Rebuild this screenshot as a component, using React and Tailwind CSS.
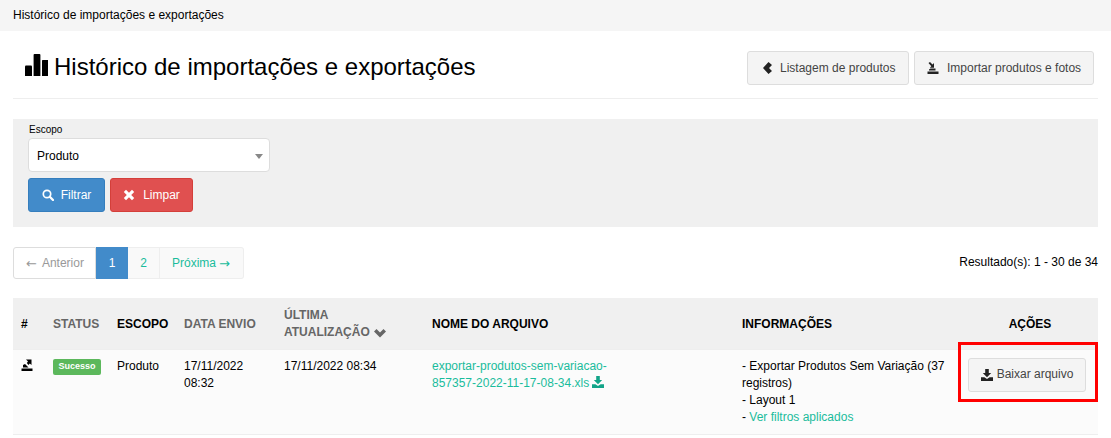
import React from 'react';

// Glyphs drawn by hand, they follow the old bootstrap glyphicons
const StatsIcon = ({ className }) => (
  <svg className={className} viewBox="0 0 23 22" fill="currentColor">
    <path d="M1 11.5 H6 Q7 11.5 7 12.5 V22 H0 V12.5 Q0 11.5 1 11.5 Z" />
    <path d="M9.5 0 H14.5 Q15.4 0 15.4 1 V22 H8.6 V1 Q8.6 0 9.5 0 Z" />
    <path d="M17.6 6 H23 V22 H17 V6.6 Q17 6 17.6 6 Z" />
  </svg>
);

const ChevronLeft = ({ className }) => (
  <svg className={className} viewBox="0 0 12 12" fill="currentColor">
    <path d="M6.5 0 L10 3 L7 6 L10 9 L6.5 12 L1 6 Z" />
  </svg>
);

const ChevronDown = ({ className }) => (
  <svg className={className} viewBox="0 0 12 12" fill="currentColor">
    <path d="M0 4.5 L2.5 2 L6 5.5 L9.5 2 L12 4.5 L6 10.5 Z" />
  </svg>
);

const ImportIcon = ({ className }) => (
  <svg className={className} viewBox="0 0 12 12" fill="currentColor">
    <path d="M0.5 9.5 H11.5 V12 H0.5 Z" />
    <path d="M2 8.5 V7.5 L3.5 6.5 H8.5 V8.5 Z" />
    <path d="M1.5 1 L3 0 L5.5 2.5 L7 1 V5.8 H2.8 L4.3 4.2 Z" />
  </svg>
);

const ExportIcon = ({ className }) => (
  <svg className={className} viewBox="0 0 12 12" fill="currentColor">
    <path d="M0.5 9.5 H11.5 V12 H0.5 Z" />
    <path d="M2 8.5 V6 L4 5 L6 7 L7.5 8.5 Z" />
    <path d="M5 0.5 H10.5 V6 L8.8 4.4 L7.5 6 L5.8 4 L7 2.4 Z" />
  </svg>
);

const DownloadIcon = ({ className }) => (
  <svg className={className} viewBox="0 0 12 12" fill="currentColor">
    <path d="M4.2 0 H7.8 V4 H10.2 L6 8.2 L1.8 4 H4.2 Z" />
    <path d="M0 8.2 H3.4 L6 10 L8.6 8.2 H12 V12 H0 Z" />
  </svg>
);

const SearchIcon = ({ className }) => (
  <svg className={className} viewBox="0 0 12 12" fill="none" stroke="currentColor">
    <circle cx="5" cy="5" r="3.7" strokeWidth="1.7" />
    <path d="M7.8 7.8 L11 11" strokeWidth="2.3" strokeLinecap="round" />
  </svg>
);

const RemoveIcon = ({ className }) => (
  <svg className={className} viewBox="0 0 12 12" fill="currentColor">
    <path d="M3 0.8 L6 3.8 L9 0.8 L11.2 3 L8.2 6 L11.2 9 L9 11.2 L6 8.2 L3 11.2 L0.8 9 L3.8 6 L0.8 3 Z" />
  </svg>
);

const App = () => {
  return (
    <div className="w-[1111px] h-[438px] overflow-hidden bg-white text-[12px] leading-[17px] text-black font-['Liberation_Sans',Arial,sans-serif]">
      {/* Breadcrumb */}
      <div className="h-[31px] bg-[#f5f5f5] pl-[13px] pt-[7px]">Histórico de importações e exportações</div>

      <div className="mx-[13px]">
        {/* Page title */}
        <div className="flex items-center justify-between h-[67px] border-b border-[#eeeeee] box-content">
          <h1 className="flex items-center text-[24px] leading-[30px] pl-[12px] pt-[5px]">
            <StatsIcon className="w-[23px] h-[22px] mr-[6px] mb-[4px]" />
            Histórico de importações e exportações
          </h1>
          <div className="flex gap-[5px] mr-[4px] mt-[7px]">
            <button className="flex items-center h-[34px] w-[162px] pl-[14px] bg-[#f4f4f4] border border-[#dddddd] rounded-[3px] text-[#444444]">
              <ChevronLeft className="w-[12px] h-[12px] mr-[6px] text-[#222222]" />
              Listagem de produtos
            </button>
            <button className="flex items-center h-[34px] w-[180px] pl-[12px] bg-[#f4f4f4] border border-[#dddddd] rounded-[3px] text-[#444444]">
              <ImportIcon className="w-[12px] h-[12px] mr-[8px] text-[#222222]" />
              Importar produtos e fotos
            </button>
          </div>
        </div>

        {/* Filter */}
        <div className="mt-[20px] h-[108px] bg-[#f0f0f0] pl-[15px] pt-[4px]">
          <label className="block text-[10px] leading-[14px] pl-[1px] h-[15px]">Escopo</label>
          <div className="relative flex items-center w-[242px] h-[34px] bg-white border border-[#dddddd] rounded-[4px] pl-[8px] pt-[2px]">
            Produto
            <span className="absolute right-[6px] top-[15px] w-0 h-0 border-x-[4px] border-x-transparent border-t-[5px] border-t-[#888888]" />
          </div>
          <div className="flex gap-[5px] mt-[6px]">
            <button className="flex items-center justify-center gap-[7px] w-[77px] h-[34px] bg-[#428bca] border border-[#357ebd] rounded-[3px] text-white">
              <SearchIcon className="w-[12px] h-[12px]" />
              Filtrar
            </button>
            <button className="flex items-center justify-center gap-[8px] w-[83px] h-[34px] bg-[#e05050] border border-[#d43f3a] rounded-[3px] text-white">
              <RemoveIcon className="w-[12px] h-[12px]" />
              Limpar
            </button>
          </div>
        </div>

        {/* Pagination + result count */}
        <div className="flex items-center justify-between mt-[20px] h-[32px]">
          <div className="flex h-[32px]">
            <span className="flex items-center w-[83px] pl-[12px] bg-white border border-[#dddddd] rounded-l-[3px] text-[#999999]">
              <span className="font-['DejaVu_Sans',sans-serif] text-[13px] mr-[5px]">←</span>Anterior
            </span>
            <span className="flex items-center justify-center w-[32px] bg-[#428bca] text-white">1</span>
            <span className="flex items-center justify-center w-[32px] bg-[#f9f9f9] border-y border-r border-[#eeeeee] text-[#1abc9c]">2</span>
            <span className="flex items-center w-[84px] pl-[12px] bg-[#f9f9f9] border-y border-r border-[#eeeeee] rounded-r-[3px] text-[#1abc9c]">
              Próxima<span className="font-['DejaVu_Sans',sans-serif] text-[13px] ml-[3px]">→</span>
            </span>
          </div>
          <span className="mt-[-1px]">Resultado(s): 1 - 30 de 34</span>
        </div>

        {/* Table */}
        <div className="relative mt-[19px]">
          <table className="w-[1085px] table-fixed border-collapse">
            <thead>
              <tr className="h-[51px] bg-[#f0f0f0] font-bold text-left">
                <th className="w-[32px] px-[8px] pt-[2px]">#</th>
                <th className="w-[64px] px-[8px] pt-[2px] text-[#666666]">STATUS</th>
                <th className="w-[67px] px-[8px] pt-[2px]">ESCOPO</th>
                <th className="w-[100px] px-[8px] pt-[2px] text-[#666666]">DATA ENVIO</th>
                <th className="w-[148px] px-[8px] pt-[2px] text-[#666666]">
                  ÚLTIMA<br />
                  <span className="inline-flex items-center">
                    ATUALIZAÇÃO
                    <ChevronDown className="w-[12px] h-[12px] ml-[4px]" />
                  </span>
                </th>
                <th className="w-[310px] px-[8px] pt-[2px]">NOME DO ARQUIVO</th>
                <th className="w-[226px] px-[8px] pt-[2px]">INFORMAÇÕES</th>
                <th className="pl-[9px] pr-[7px] pt-[2px] text-center">AÇÕES</th>
              </tr>
            </thead>
            <tbody>
              <tr className="h-[85px] bg-[#fbfbfb] border-t border-b border-[#eeeeee] align-top">
                <td className="px-[8px] pt-[9px]">
                  <ExportIcon className="w-[12px] h-[12px]" />
                </td>
                <td className="px-[8px] pt-[9px]">
                  <span className="flex items-center justify-center w-[48px] h-[16px] bg-[#5cb85c] rounded-[2px] text-white text-[9px] font-bold">Sucesso</span>
                </td>
                <td className="px-[8px] pt-[8px]">Produto</td>
                <td className="px-[8px] pt-[8px]">17/11/2022 08:32</td>
                <td className="px-[8px] pt-[8px]">17/11/2022 08:34</td>
                <td className="px-[8px] pt-[8px] text-[#1abc9c]">
                  exportar-produtos-sem-variacao-<br />
                  857357-2022-11-17-08-34.xls
                  <DownloadIcon className="inline-block w-[12px] h-[12px] ml-[3px] align-[-1px] text-[#12a488]" />
                </td>
                <td className="px-[8px] pt-[8px]">
                  - Exportar Produtos Sem Variação (37 registros)<br />
                  - Layout 1<br />
                  - <span className="text-[#1abc9c]">Ver filtros aplicados</span>
                </td>
                <td className="pl-[8px] pt-[8px]">
                  <button className="flex items-center justify-center gap-[4px] w-[118px] h-[34px] bg-[#f4f4f4] border border-[#dddddd] rounded-[3px] text-[#444444]">
                    <DownloadIcon className="w-[12px] h-[12px] text-[#222222]" />
                    Baixar arquivo
                  </button>
                </td>
              </tr>
            </tbody>
          </table>
          {/* Red highlight drawn over the action cell */}
          <div className="absolute left-[945px] top-[44px] w-[140px] h-[60px] border-[3px] border-[#ff0000] pointer-events-none" />
        </div>
      </div>
    </div>
  );
};

export default App;
